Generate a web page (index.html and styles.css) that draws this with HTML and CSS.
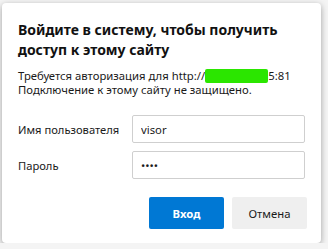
FILE: index.html
```html
<!DOCTYPE html>
<html lang="ru">

<head>
  <meta charset="UTF-8">
  <meta name="viewport" content="width=device-width, initial-scale=1.0">
  <title>Вход</title>
  <link rel="stylesheet" href="styles.css">
</head>

<body>

  <main class="auth__dialog">
    <h1 class="auth__title">Войдите в систему, чтобы получить доступ к этому сайту</h1>
    <p class="auth__info">Требуется авторизация для http://<span class="auth__mask"></span>5:81<br>Подключение к этому сайту не защищено.</p>

    <form class="auth__form" action="">
      <div class="form__row">
        <label for="user">Имя пользователя</label>
        <input id="user" type="text" value="visor">
      </div>
      <div class="form__row">
        <label for="pass">Пароль</label>
        <input id="pass" type="password" value="1234">
      </div>
      <div class="form__buttons">
        <button type="button" class="btn btn--primary">Вход</button>
        <button type="button" class="btn">Отмена</button>
      </div>
    </form>
  </main>

</body>

</html>
```

FILE: styles.css
```css
:root {
  --clr-primary: #0078d4;
  --clr-text: #1a1a1a;
  --clr-border: #cfcfcf;
  --clr-btn: #efefef;
  --fnt-main: "Noto Sans", "Open Sans", sans-serif;
}

* {
  box-sizing: border-box;
  margin: 0;
  padding: 0;
}

body {
  font-family: var(--fnt-main);
  background-color: #f4f4f4;
  color: var(--clr-text);
}

.auth__dialog {
  width: 319px;
  height: 240px;
  margin: 3px 0 0 2px;
  padding: 17px 14px 0 16px;
  background-color: #fff;
  border-radius: 4px;
  box-shadow: 0 2px 6px rgba(0, 0, 0, 0.35);
}

.auth__title {
  font-size: 14px;
  line-height: 20px;
  font-weight: 700;
  color: #111;
}

.auth__info {
  margin-top: 9px;
  font-size: 11.3px;
  line-height: 14px;
  white-space: nowrap;
}

.auth__mask {
  display: inline-block;
  width: 63px;
  height: 14px;
  vertical-align: -3px;
  background-color: #2be600;
  border-radius: 2px;
}

.auth__form {
  margin-top: 18px;
  display: grid;
  gap: 8px;
}

.form__row {
  display: flex;
  align-items: center;
}

.form__row label {
  width: 114px;
  font-size: 11.2px;
}

.form__row input {
  width: 173px;
  height: 28px;
  padding: 0 8px;
  font-family: var(--fnt-main);
  font-size: 11.3px;
  color: var(--clr-text);
  border: 1px solid var(--clr-border);
  border-radius: 2px;
  outline: none;
}

.form__buttons {
  margin-top: 10px;
  display: flex;
  justify-content: flex-end;
  gap: 8px;
}

.btn {
  width: 75px;
  height: 32px;
  font-family: var(--fnt-main);
  font-size: 11.3px;
  color: var(--clr-text);
  border: none;
  border-radius: 2px;
  background-color: var(--clr-btn);
}

.btn--primary {
  font-weight: 700;
  color: #fff;
  background-color: var(--clr-primary);
}
```
